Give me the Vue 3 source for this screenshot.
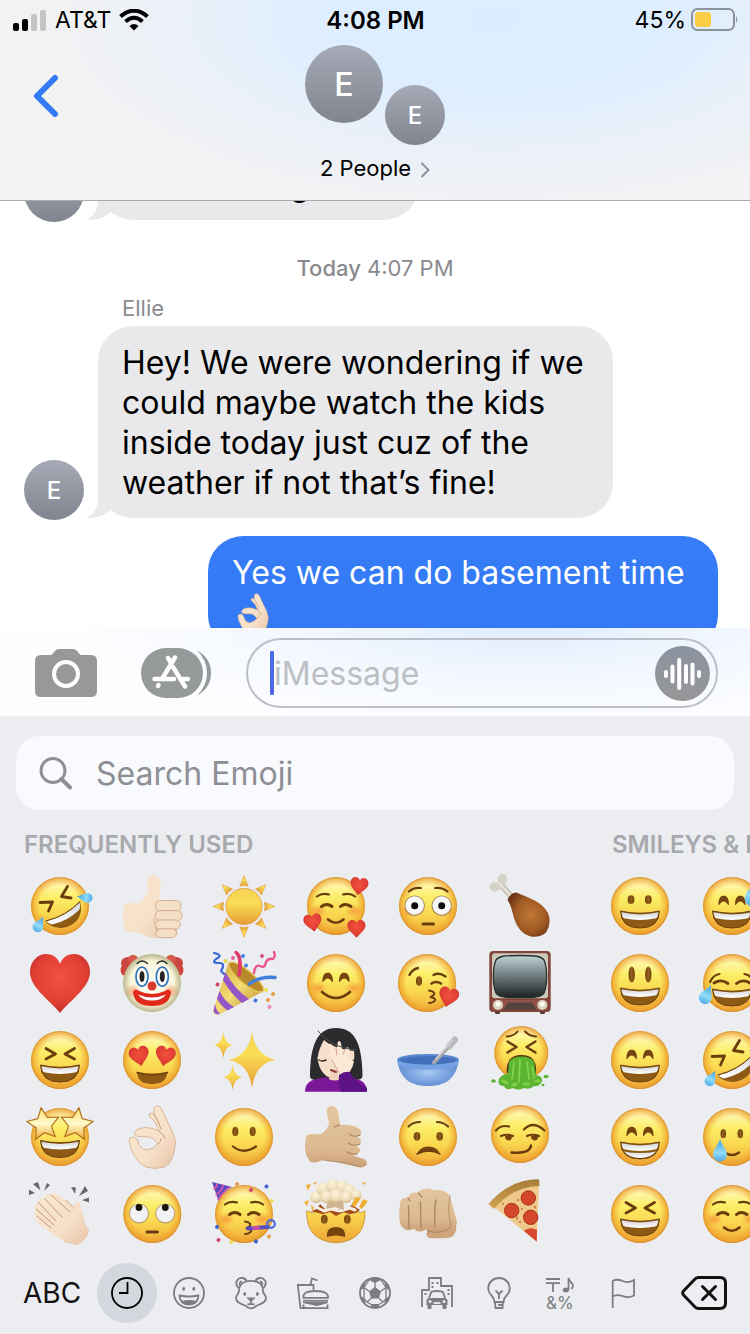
<script setup>
import { ref } from 'vue'

const draft = ref('')
const query = ref('')
const activeTab = ref('recent')

/* ---------- drawing helpers (64 x 64 canvas) ---------- */
const INK = '#6b3d0c'
const face = (x = 32, y = 32, r = 29) =>
  `<circle cx="${x}" cy="${y}" r="${r}" fill="url(#face)"/><circle cx="${x}" cy="${y}" r="${r}" fill="url(#rim)"/>`
const line = (d, w = 2.4, c = INK) =>
  `<path d="${d}" fill="none" stroke="${c}" stroke-width="${w}" stroke-linecap="round" stroke-linejoin="round"/>`
const fill = (d, c) => `<path d="${d}" fill="${c}"/>`
const oval = (x, y, rx, ry, c = 'url(#eye)') => `<ellipse cx="${x}" cy="${y}" rx="${rx}" ry="${ry}" fill="${c}"/>`
const grin = (dy = 0) =>
  `<g transform="translate(0 ${dy})"><path d="M12.500 37Q32 41.500 51.500 37Q51 54 32 54Q13 54 12.500 37Z" fill="#8d5a16" stroke="#6b3d0c" stroke-width="1"/><path d="M13.500 38.300Q32 42.500 50.500 38.300Q50 43 48 44.300Q32 47.600 16 44.300Q14 43 13.500 38.300Z" fill="url(#teeth)"/></g>`
const arches = () =>
  [23.7, 40.3].map((x) => `<path transform="translate(${x} 0)" d="M-5.300 31C-5.300 24 -3 21.800 0 21.800S5.300 24 5.300 31C4 31.600 3 27.500 0 27.500S-4 31.600 -5.300 31Z" fill="#75430f"/>`).join('')
const squint = line('M18 20.500L27.500 26L18 31', 2.8) + line('M46.500 20.500L37 26L46.500 31', 2.8)
const closed = line('M17.500 32.500Q23 28.500 28 32.500', 3) + line('M36.500 32.500Q41 28.500 47 32.500', 3)
const softBrows = line('M13 22.500Q18 18.500 25 20.500', 2.2) + line('M39 20.500Q46 18.500 51 22.500', 2.2)
const blush = oval(14, 37, 9, 7, 'url(#blush)') + oval(50, 37, 9, 7, 'url(#blush)')
const heart = (x, y, s, a = 0) =>
  `<path transform="translate(${x} ${y}) rotate(${a}) scale(${s / 60})" d="M0 29C-9 17 -30 4 -30 -12C-30 -23 -22 -30 -14 -30C-7 -30 -2 -26 0 -20C2 -26 7 -30 14 -30C22 -30 30 -23 30 -12C30 4 9 17 0 29Z" fill="url(#heart)"/>`
const drop = (x, y, s, a = 0) =>
  `<path transform="translate(${x} ${y}) rotate(${a}) scale(${s})" d="M0 -11C2 -4 7 -1 7 5A7 6.500 0 0 1 -7 5C-7 -1 -2 -4 0 -11Z" fill="url(#water)"/>`
const star = (x, y, r, a) => {
  const pts = []
  for (let i = 0; i < 10; i++) {
    const t = (i * 36 - 90 + a) * Math.PI / 180
    const q = i % 2 ? r * 0.48 : r
    pts.push(`${(x + q * Math.cos(t)).toFixed(1)},${(y + q * Math.sin(t)).toFixed(1)}`)
  }
  return `<polygon points="${pts.join(' ')}" fill="url(#star)" stroke="#b57220" stroke-width="1.200" stroke-linejoin="round"/>`
}
const spark = (x, y, w, h) =>
  fill(`M${x} ${y - h}Q${x + w * 0.14} ${y - h * 0.14} ${x + w} ${y}Q${x + w * 0.14} ${y + h * 0.14} ${x} ${y + h}Q${x - w * 0.14} ${y + h * 0.14} ${x - w} ${y}Q${x - w * 0.14} ${y - h * 0.14} ${x} ${y - h}Z`, 'url(#gold)')
const dots = (list) => list.map(([x, y, c]) => `<rect x="${x - 1.8}" y="${y - 1.8}" width="3.600" height="3.600" rx="1" transform="rotate(30 ${x} ${y})" fill="${c}"/>`).join('')
const lips = line('M33 39.500Q41 41 37 44.500L34.500 46Q41.500 47.500 38 50.500Q36 52 33 52', 2)

const rays = [0, 45, 90, 135, 180, 225, 270, 315]
  .map((a) => `<path transform="rotate(${a} 32 32.500)" d="M32 1.500L36.300 12.200Q32 10.800 27.700 12.200Z" fill="url(#gold)" stroke="#dc9a3c" stroke-width=".5"/>`)
  .join('')
const rofl =
  face() +
  line('M39.500 12.500L33.500 22.500L43 24', 2.8) + line('M12 28.500L24.500 28L20.500 37', 2.8) +
  fill('M18 47Q38 42 52 27.500Q56 42 45 50Q33 57.500 21.500 51Q18 49 18 47Z', '#8d5a16') +
  fill('M18.500 47.300Q38 42.500 51.500 28.500Q53 33 51 36Q40 47 24 50.500Q20 50 18.500 47.300Z', 'url(#teeth)') +
  line('M18 47Q38 42 52 27.500', 1) +
  drop(56.5, 23.5, 0.7, -82) + drop(11.5, 50, 0.75, 28)

const art = {
  rofl,
  thumb:
    fill('M33.500 1C39 1 41 6 40.800 13C40.500 19 38.500 23 39 27L57 27L57 60Q54 64 46 63.700L34 63.700Q28 63.500 18 58.300L8 58.300Q3 55 2.700 42Q3 31 5 29.500Q12 28.500 18 29.500Q25 24 28 17C27.500 12 26.500 8 27.300 5Q29 1 33.500 1Z', 'url(#pale)') +
    [[26.5, 10.6, 61], [36.6, 9.8, 62], [46, 9.2, 60.3], [54.8, 8.8, 56.5]].map(([y, h, r]) => `<rect x="35.500" y="${y}" width="${r - 35.5}" height="${h}" rx="4.600" fill="#f5dfc6" stroke="#d3a987" stroke-width=".9"/>`).join('') +
    line('M34 44Q35 54 38 58', 1.2, '#dcb998'),
  sun: rays + '<circle cx="32" cy="32.500" r="18" fill="url(#gold)" stroke="#dc9a3c" stroke-width=".8"/>',
  adore: face() + blush + softBrows + closed + line('M24 45.500Q32 52 39.500 45.500', 2.6) + heart(55, 12.5, 18, 8) + heart(9, 49, 18, -10) + heart(52.5, 55, 18),
  flushed:
    face() + blush + line('M13 17.500Q18 13 25 14', 2.2) + line('M39 14Q46 13 51.500 17.500', 2.2) +
    oval(18.7, 31.7, 10.2, 10.2, '#a7895f') + oval(45.7, 31.7, 10.2, 10.2, '#a7895f') +
    oval(18.7, 31.5, 9.2, 9.2, '#f8f8f8') + oval(45.7, 31.5, 9.2, 9.2, '#f8f8f8') +
    oval(18.7, 31.7, 3.5, 3.5, '#0b0b0b') + oval(45.7, 31.7, 3.5, 3.5, '#0b0b0b') + line('M27 50H37.500', 3),
  drumstick:
    line('M13 11L24 23', 6, '#c9c2b8') + oval(14.5, 5.2, 4.6, 5.4, '#d5d0c8') + oval(7, 12.8, 5.6, 4.6, '#d5d0c8') + line('M12 10L22 21', 2.5, '#e8e4de') +
    fill('M19.500 26Q22 19 28.500 18.500C40 24 54 27 60 39Q64 49 58 58.500Q52 63.500 44 62.700C35 61 29 54 26 44C24 37 23 31 19.500 26Z', 'url(#roast)'),
  heart: heart(32, 33, 60),
  clown:
    oval(8, 12, 7, 6, '#c9453b') + oval(5.500, 19, 5, 6, '#c9453b') + oval(56, 12, 7, 6, '#c9453b') + oval(58.500, 19, 5, 6, '#c9453b') + oval(13, 8, 5, 4, '#d9574a') + oval(51, 8, 5, 4, '#d9574a') +
    '<circle cx="32" cy="32" r="29" fill="url(#clown)"/>' + oval(13, 40, 8, 7, 'url(#blush)') + oval(51, 40, 8, 7, 'url(#blush)') +
    line('M17 12.500Q22 7.500 27.500 12.500', 1.3, '#222') + line('M37 12.500Q42 7.500 47 12.500', 1.3, '#222') +
    [22, 42.3].map((x) => `<ellipse cx="${x}" cy="25.700" rx="6" ry="9.600" fill="#fff" stroke="#2f74b8" stroke-width="1.700"/><ellipse cx="${x}" cy="25.500" rx="2.500" ry="5.500" fill="#222"/>`).join('') +
    oval(32, 35, 4.5, 4.5, '#d93a2c') + fill('M13 41Q15 36.500 19 40Q32 46 45 40Q49 36.500 51 41Q50 55 32 55Q14 55 13 41Z', '#e0281b') + fill('M18 43.500Q32 49.500 46 43.500Q42 49.500 32 49.500Q22 49.500 18 43.500Z', '#fff'),
  party:
    fill('M16.500 11.500L1 60Q2 65 8 63L50 41Z', 'url(#cone)') + fill('M13.500 21L11 29Q19 43 30 52L37 48Q22 38 13.500 21Z', '#9556c9') + fill('M7.500 40L5 48Q10 56 15.500 59.500L22 56Q12 50 7.500 40Z', '#9556c9') + fill('M3 53L1.500 60Q3 64 8 63Q4 59 3 53Z', '#9556c9') +
    '<ellipse cx="34" cy="26" rx="22" ry="6.500" transform="rotate(40 34 26)" fill="#b98a2a" stroke="#ecc659" stroke-width="1.400"/>' +
    line('M27 24C29 13 28 4 24 1.500', 3.4, '#e0396d') + line('M37 33Q48 25 63 26.500', 3.4, '#3f80df') + line('M2 2Q12 4 4 8Q-1 12 7 12Q14 12 9 20L12 23', 2.2, '#3a68d6') + line('M42 22Q43 13 48 15Q53 18 54 11Q56 7 61 8Q64 5 62 1', 2.4, '#e85690') +
    dots([[13.500, 10, '#ecd744'], [21, 7, '#ea5e9a'], [31, 5, '#4a86e8'], [34, 14.500, '#4a86e8'], [50, 5, '#dd5682'], [5.500, 33.500, '#cf4560'], [54, 39, '#f0dc55'], [61, 43, '#e0a04a'], [56, 49, '#e89a4a'], [43.500, 49.500, '#4a76d8'], [57.500, 56, '#ee86b8']]),
  blushing: face() + blush + arches() + line('M18 41Q32 53 46 41', 2.6),
  kiss:
    face(31, 32) + line('M13.500 24Q16 18.500 22 17', 2.4) + line('M37.500 24Q43 21 49.500 25.500', 2.4) + oval(23, 30, 3.1, 4.8) + line('M35.500 32.500Q40 29.500 45 32.500', 2.6) + lips + heart(52.3, 46.5, 20, 14),
  tv:
    '<rect x="7" y="58" width="5" height="5" rx="1.500" fill="#54302a"/><rect x="52" y="58" width="5" height="5" rx="1.500" fill="#54302a"/><rect x="1.300" y="0" width="61.400" height="61" rx="4" fill="#80463b"/><rect x="4" y="2.300" width="56" height="45" rx="3" fill="#cfc9bb"/><path d="M32 4.500C48 4.500 53 5 56 9C59.500 17 59.500 34 56 42C53 46 48 46.700 32 46.700S11 46 8 42C4.500 34 4.500 17 8 9C11 5 16 4.500 32 4.500Z" fill="url(#screen)" stroke="#2a2f30" stroke-width="1.300"/><rect x="4" y="49" width="56" height="10" rx="2" fill="#925448"/><path d="M20 51.500H44L49 59H15Z" fill="#55443e"/>' +
    oval(10, 54, 5, 5, '#ddd5c4') + oval(54.3, 54, 5, 5, '#ddd5c4') + oval(10, 53, 2.5, 2.5, '#fffbee') + oval(54.3, 53, 2.5, 2.5, '#fffbee'),
  laugh: face() + squint + grin(),
  love: face() + heart(19.5, 28.5, 20, -12) + heart(45, 28.5, 20, 12) + fill('M17 44.500Q32 48.500 47.500 44.500Q46 56 32 56Q18 56 17 44.500Z', '#8d5a16') + line('M17 44.500Q32 48.500 47.500 44.500', 1.4),
  sparkles: spark(40, 31.7, 23.5, 28) + spark(11.3, 17, 9, 13) + spark(20.7, 49.3, 9, 12.5),
  facepalm:
    fill('M32 0C50 0 58 14 58.500 48Q58 52 52 52H12Q6 52 6 48C6 18 13 0 32 0Z', '#2b2b2d') + fill('M13.500 30Q15 20 20 12Q28 20 50 23Q53 46 32 51Q16 50 13.500 30Z', '#f7dfcb') + fill('M27 42H39V54H24Z', '#efd0b8') +
    fill('M1 63.700Q1 53 13 51L22 49Q30 56 41 49L52 51Q63 53 63 63.700Z', '#7d179a') + line('M15 32Q18 34 22 32', 1.4, '#3a2a22') + line('M44 32Q47 34 50 32', 1.4, '#3a2a22') + line('M27 42L32 44', 2, '#8b3f2d') +
    fill('M24.500 18Q25 14 28 17L33 26L33.500 15Q35 11 37 15L38.500 25L42 20Q45 18 45.500 22L45 30Q50 31 49 36L46 43L45 49H34L34 40Q26 31 26 25Z', '#fbe8d6') + line('M28 32L35 45M33 27L32 20M39 26L41 22', 0.9, '#cf9f82') +
    fill('M35 47Q40 43 46 44Q50 53 63 60V63.700H37Q34 56 35 47Z', '#5c1283') + line('M14 3Q27 20 52 22', 1, '#4f5053'),
  bowl:
    fill('M1.300 31C3 50 14 58 32 58S61 50 62.700 31Z', 'url(#bowl)') + oval(32, 31.5, 30.7, 5.6, '#5b8ad2') + oval(32, 32.3, 28.5, 4, '#4370b9') + line('M38 34.500L56 15', 4, '#a9a7ae') + line('M53 18.500L59 11.500', 6, '#b9b6bc') + line('M40 31L57 12', 1.2, '#d8d6db') + fill('M1.500 33Q32 41 62.500 33Q62 36 61.500 38Q32 45 2.500 38Z', '#75a2e4'),
  sick:
    face(33.3, 25, 27) + line('M19 8.500Q26 8 29.500 3.500', 2) + line('M37 3.500Q41 8 48 8.500', 2) + line('M19.500 13.500L28.500 19L19.500 24.500', 2.4) + line('M47.500 13.500L38.500 19L47.500 24.500', 2.4) +
    fill('M18.700 45C18 33 23 27 33.500 27S49 33 48 45Z', '#54340e') + fill('M21 34Q24 28.500 33.500 28.500T46 34L48 47Q55 48 54 53Q52 59 46 58Q42 62 36 60Q30 63 25 60Q18 63 16 58Q9 58 11 51Q14 46 20 46Z', '#5cb531') +
    line('M26 34L24 51M32 32L31 54M39 34L41 51M44 39L46 50', 1.6, '#86d64d') + line('M15 53L19 55M25 57L28 56M36 56L40 56M48 53L51 53', 3, '#7fd149') + oval(5.5, 53, 2.3, 1.8, '#5cb531') + oval(58, 48.500, 2.5, 1.8, '#5cb531') + oval(55, 57, 1.5, 1.2, '#5cb531'),
  starstruck: face() + grin(-1.5) + star(15.5, 19.5, 17, -8) + star(48.5, 19.5, 17, 8),
  ok:
    '<path fill-rule="evenodd" d="M36.700 1Q41 1 42.500 6L48 18Q53.500 27 55.500 37Q55 45 53 50Q51 59 44 62Q35 65 26 62Q18 58 14 50Q10 43 9 36Q9 32 13 32Q17 32.500 18 36Q19 42 23 44Q28 46 33 43L38 39Q35 34 30 32L19 31.500Q14 31 14.500 28Q16 23 26 22.500Q33 23 39 26L35 17Q29 12 29 9Q30 7 34 9Q33 1 36.700 1Z" fill="url(#pale)" stroke="#d3a987" stroke-width=".8"/>' +
    line('M34 9Q38 15 41 24M39 26Q44 30 45 33M38 39Q41 37 41 34', 1, '#c79672'),
  smile: face() + oval(23.3, 26.5, 3, 4.8) + oval(40.7, 26.5, 3, 4.8) + line('M21 41.500Q32 50 44 41.500', 2.2),
  callme:
    fill('M27.500 1Q33 1 34.500 9L36 20Q47 19 54 23Q58 25 57 29Q55 32 52 32Q58 33 57 37Q56 41 51 41Q57 43 56 46Q54 50 48 50L60 54Q64 56 62.500 60Q60 63 54 62L32 57L19 55Q11 59 6 56.500Q1 50 1 42Q1 31 4 29.500Q10 28.500 16 29.500Q24 25 25 18L22.500 6Q23 1 27.500 1Z', 'url(#tan)') +
    line('M45 29Q51 33 56 30M44 38Q50 42 56 39M43 47Q48 50 53 49M36 20L30 22', 1.1, '#a8835e') + line('M19 55L42 58L57 62', 0.8, '#a8835e'),
  worried: face() + line('M12.500 21.500Q17 17 24 17', 2.2) + line('M41 17Q47 17 52 21.500', 2.2) + oval(21, 31.3, 3.3, 4.4) + oval(43.7, 31.3, 3.3, 4.4) + fill('M20.500 49.500Q24 41.500 32.500 41.500T44.500 49.500Q33 43.500 20.500 49.500Z', '#75430f') + line('M21 49Q33 43 44 49', 1.4),
  smirk:
    face(32, 29) + line('M8 25.500Q13 19.500 21 21.500', 2.2) + line('M36 24.500Q45 15 56.500 25.500', 2.2) + line('M13 31Q19 28.500 25 31', 2.2) + line('M39 31Q45 28.500 51 31', 2.2) + fill('M17 31H24Q24 35.500 20.500 35.500Q17 35 17 31Z', '#75430f') + fill('M43 31H50.500Q50 35.500 46.500 35.500Q43 35 43 31Z', '#75430f') + line('M23.500 47.500Q42 49 43 40.500', 2.4),
  clap:
    fill('M5 2L10 0L12.500 8.500ZM1 7.500L7 11L1 13ZM19 1L22 3L16 9ZM43 5L48 5.500L47 12ZM57 4L60 9L51 14ZM54 18L61 15.500V20.500Z', '#67686a') +
    fill('M34 20Q38 15 42 21L53 31Q56 42 61 48Q60 57 49 63L36 60Z', '#e9c9ac') +
    fill('M10 20Q11 14 17 17Q17 10 23 13Q26 9 31 13L47 28Q46 22 48 20Q52 19 53 25Q57 38 57 44L61 49Q58 59 48 63Q38 60 34 58Q23 52 8 39Q5 36 9 34Q3 28 8 27Q5 22 10 20Z', 'url(#pale)') + line('M17 17L34 35M23 13L42 30M10 20L28 39M8 27L26 43M9 34L23 46', 1, '#c79672'),
  eyeroll:
    face(32.3, 32) + [19, 45.3].map((x) => oval(x, 31.5, 10, 10, '#b59a72') + oval(x, 31.3, 9, 9, '#f2f2f4') + oval(x, 25.5, 3.4, 3.4, '#1a1208')).join('') + line('M27 50H37.500', 3),
  birthday:
    face() + blush + fill('M0 0L20 5Q11 9 6.500 19Z', '#5a49bd') + line('M5 2Q5 5 2 7M11 3Q11 8 4 13M17 5Q13 9 6 17', 1.6, '#dd58ac') + softBrows + closed + lips +
    line('M36 46.500L56 45', 4, '#5a4cc6') + line('M42 46L46 46', 4, '#c651a4') + '<circle cx="59" cy="42" r="3.800" fill="none" stroke="#4f66d3" stroke-width="2.200"/>' +
    dots([[25, 2, '#e5a04e'], [39, 8, '#d34868'], [54.500, 4.500, '#3f65cf'], [59.500, 19, '#f1dc52'], [5, 45, '#3f65cf'], [6.500, 58, '#d34868'], [19.500, 60, '#eed94f'], [44, 59.500, '#3f65cf'], [57, 54.500, '#e5a04e']]),
  mindblown:
    '<path d="M2.700 29L9 31L13 28L19 32L26 29L32 33L38 29L45 32L52 28L56 31L61 29Q62 59 32 60.800Q2 59 2.700 29Z" fill="url(#faceLow)" stroke="#c88625" stroke-width=".8"/>' +
    fill('M7 29L13 27L16 22L21 27L42 27L48 23L56 28L52 31L46 32L40 30L32 34L26 30L18 32Z', '#a54b1f') + line('M14 26L20 29L27 27L36 29L46 26L51 28', 3, '#f5efe2') + fill('M24 18L22 27L31 25L40 28L39 18Z', '#cdb48f') +
    [[12, 15, 6], [19, 7, 6.5], [29, 4, 6.500], [38, 5, 6], [45, 9, 6.500], [52, 13, 5.500], [22, 15, 6], [32, 14, 7], [42, 15, 6]].map(([x, y, r]) => `<circle cx="${x}" cy="${y}" r="${r}" fill="url(#cloud)"/>`).join('') +
    fill('M2 3L7 2L4 9ZM9 1L13 0L11 3ZM58 1L62 0L61 3ZM52 15L57 16L51 25L47 23ZM59 17L64 19L58 27L55 25ZM0 20L5 18L3 24ZM7 22L10 26L8 29Z', '#efae36') + oval(20.3, 37.3, 3.3, 4.5) + oval(43.3, 37.3, 3.3, 4.5) + fill('M23 55Q22 45 32 45T41 55Q32 52 23 55Z', '#75430f'),
  fist:
    fill('M30 46L59 40Q63 48 56 55Q50 57 33 56Q29 53 31 50Z', '#cda47c') +
    fill('M4 21Q5 15 12 16Q14 9 22 11Q25 6 33 6.500Q38 9 41 8Q50 8 54 14Q57 25 61 40Q61 45 56 46Q50 50 44 47Q36 51 31 47Q23 52 18 47Q10 50 6 45Q3 42 3.300 31Z', 'url(#tan)') + line('M12.500 24L13 46M24.500 20L25 46M40 18Q38 27 39 45M12 16L14 19M22 11L26 15', 1.3, '#a8835e') + line('M54 14Q51 30 55 44', 1, '#b58e66') + line('M32 49Q45 53 55 45', 1, '#a8835e'),
  pizza:
    fill('M4 23Q23 2 51 3L48.700 60Z', '#efc98c') + fill('M0.500 22Q22 -3 51 -2.700L51.500 4Q24 5 6 27Z', 'url(#crust)') + oval(30, 18, 1.5, 1, '#d1803d') + oval(32, 40, 1.5, 1, '#d1803d') + oval(29, 36, 1, 1.5, '#c96c33') + oval(47, 25, 1.2, 1.6, '#d1803d') + oval(15, 22, 1.2, 1, '#d1803d') + oval(34, 27, 1, 1, '#c96c33') +
    [[40.3, 16, 7.2], [23.7, 28.5, 7.2], [42.7, 35.3, 7.2]].map(([x, y, r]) => `<circle cx="${x}" cy="${y}" r="${r}" fill="#d5472c" stroke="#a9301c" stroke-width="1"/>`).join('') + fill('M36 49Q41 44 49 48L48.700 59.500Z', '#d5472c'),
  grinning: face() + oval(23, 25.7, 3.4, 4.4) + oval(40.3, 25.7, 3.4, 4.4) + grin(),
  open: face() + oval(23.7, 23.5, 3.2, 8) + oval(40.3, 23.5, 3.2, 8) + grin(),
  happy: face() + arches() + grin(),
  beaming: face() + arches() + grin() + fill('M16 46.500Q32 49.500 48 46.500Q43 53 32 53T16 46.500Z', 'url(#teeth)'),
  sweat: face() + arches() + grin() + drop(54, 19, 1.2, 8),
  joy: face() + line('M10 31Q13 24 19.500 23', 2.2) + line('M44.500 23Q51 24 54 31', 2.2) + line('M14 32Q21 27.500 28 32.500', 2.8) + line('M36.500 32.500Q43 27.500 50 32', 2.8) + grin(1) + drop(7, 43, 0.9, 25) + drop(57, 43, 0.9, -25),
  tear: face() + oval(23.3, 28.7, 2.8, 4.6) + oval(40.3, 28.7, 2.8, 4.6) + line('M25 47.500Q32 52.500 39 47.500', 2.4) + drop(20, 45, 1, 0),
  relaxed: face() + blush + softBrows + closed + line('M24 45.500Q32 52 39.500 45.500', 2.6),
}

const groups = [
  {
    id: 'recent',
    title: 'Frequently used',
    rows: [
      ['rofl', 'thumb', 'sun', 'adore', 'flushed', 'drumstick'],
      ['heart', 'clown', 'party', 'blushing', 'kiss', 'tv'],
      ['laugh', 'love', 'sparkles', 'facepalm', 'bowl', 'sick'],
      ['starstruck', 'ok', 'smile', 'callme', 'worried', 'smirk'],
      ['clap', 'eyeroll', 'birthday', 'mindblown', 'fist', 'pizza'],
    ],
  },
  {
    id: 'smileys',
    title: 'Smileys & People',
    rows: [['grinning', 'sweat'], ['open', 'joy'], ['happy', 'rofl'], ['beaming', 'tear'], ['laugh', 'relaxed']],
  },
]

const tabs = [
  { id: 'recent', svg: '<circle cx="16" cy="16" r="15"/><path d="M16.500 5V16H8"/>' },
  { id: 'smileys', svg: '<circle cx="16" cy="16" r="15"/><ellipse cx="10.700" cy="11.800" rx="1" ry="1.600" fill="currentColor" stroke-width="1"/><ellipse cx="20.800" cy="11.800" rx="1" ry="1.600" fill="currentColor" stroke-width="1"/><path d="M6.500 18.500Q16 20.500 25.500 18.500Q25 27.500 16 27.500T6.500 18.500Z"/><path d="M8.500 24Q16 22 23.500 24Q21 27.500 16 27.500T8.500 24Z" fill="currentColor" stroke="none"/>' },
  { id: 'animals', svg: '<path d="M3.500 11Q0 7 2 3.500Q4 .5 7.500 1Q11 1.500 11.500 4.500M28.500 11Q32 7 30 3.500Q28 .5 24.500 1Q21 1.500 20.500 4.500M5 8Q4 5 7 4.500M27 8Q28 5 25 4.500"/><path d="M16 3.800C24 3.800 28 8 28 14C28 17 31 18 31 21C31 26 25 27 21 29Q19 31.300 16 31.300T11 29C7 27 1 26 1 21C1 18 4 17 4 14C4 8 8 3.800 16 3.800Z"/><ellipse cx="9.700" cy="17" rx="1" ry="1.500" fill="currentColor" stroke-width="1"/><ellipse cx="22.300" cy="17" rx="1" ry="1.500" fill="currentColor" stroke-width="1"/><path d="M13.500 21.500H18.500L16 24Z" fill="currentColor"/><path d="M16 24V27M12.500 27.500Q16 26.500 19.500 27.500"/>' },
  { id: 'food', svg: '<path d="M13.500 7.500L15 1.500L20.500 3.500M16.500 13V8H.8L3.500 31.200H10"/><path d="M6.500 20.800Q5 14 18.500 14T31 20.800Z"/><path d="M6 23.800H31" /><path d="M6 25.500H31L20 28.500Z" fill="currentColor" stroke-width="1"/><path d="M6.500 27.500V31.200H30.500V27.500"/>' },
  { id: 'sports', svg: '<circle cx="16" cy="16" r="15"/><path d="M16 10.500L21.500 14.500L19.500 21H12.500L10.500 14.500ZM10 2.500L16 5.500L22 2.500L16 1ZM1.500 13L5.500 10L6 4.500L3 8ZM30.500 13L26.500 10L26 4.500L29 8ZM6 26.500L5.500 22L1.500 19.500L3 24ZM26 26.500L26.500 22L30.500 19.500L29 24ZM12 30.500L13 27.500H19L20 30.500Z" fill="currentColor" stroke-width="1"/><path d="M16 5V11M10.500 14.500L5 10.500M21.500 14.500L27 10.500M12.500 21L8 25M19.500 21L24 25M8 25L13 28M24 25L19 28M5 10.500V22L8 25M27 10.500V22L24 25M5 10.500Q8 6 10 3M27 10.500Q24 6 22 3" stroke-width="1.300"/>' },
  { id: 'travel', svg: '<path d="M1 30V13H8V1H20V9H31V30"/><path d="M11.500 5V7M16.500 5V7M11.500 9V11M4.500 16V18M27.500 12V14M27.500 16V18" stroke-width="2"/><path d="M8 21L10 15.500Q11 14 16 14T22 15.500L24 21"/><path d="M5.500 23Q6 21 9 21H23Q26 21 26.500 23V28H5.500Z" fill="currentColor" stroke="none"/><path d="M7 28V31.500H10V28M22 28V31.500H25V28" fill="currentColor" stroke-width="1"/><circle cx="9" cy="24.500" r="1.500" fill="#ecedf1" stroke="none"/><circle cx="23" cy="24.500" r="1.500" fill="#ecedf1" stroke="none"/><path d="M12.500 26H19.500" stroke="#ecedf1"/>' },
  { id: 'objects', svg: '<path d="M11.500 25Q11.500 21.500 8.500 18.500Q5.200 15 5.200 11.500C5.200 5.500 10 1 16 1S26.800 5.500 26.800 11.500Q26.800 15 23.500 18.500Q20.500 21.500 20.500 25Z"/><path d="M12.500 13.500L16 17L19.500 13.500M16 17V22M12 25L12.500 31H19.500L20 25M15 28H19"/>' },
  { id: 'symbols', svg: '<path d="M1 2H15M1 6.200H15M8 6.200V15"/><path d="M23.500 13V1Q24 4 27 6.500Q29 9 26.500 12"/><ellipse cx="20.800" cy="13" rx="2.800" ry="2" fill="currentColor" stroke-width="1"/>', text: '&%' },
  { id: 'flags', svg: '<path d="M5.700 31V4Q10 1.500 15.500 4Q21 6.500 27 3V18.500Q21 21.500 15.500 19Q10 17 5.700 19.500"/>' },
]
</script>

<template>
  <main class="phone">
    <svg class="defs" aria-hidden="true">
      <defs>
        <linearGradient id="face" x1="0" y1="0" x2="0" y2="1"><stop offset="0" stop-color="#fffbd2" /><stop offset=".35" stop-color="#fcee68" /><stop offset=".65" stop-color="#f9d64e" /><stop offset="1" stop-color="#f0ac3c" /></linearGradient>
        <linearGradient id="faceLow" x1="0" y1="0" x2="0" y2="1"><stop offset="0" stop-color="#fade54" /><stop offset="1" stop-color="#eea534" /></linearGradient>
        <radialGradient id="rim"><stop offset=".7" stop-color="#f0a028" stop-opacity="0" /><stop offset=".93" stop-color="#ee9f2c" stop-opacity=".7" /><stop offset="1" stop-color="#cf8128" stop-opacity=".9" /></radialGradient>
        <radialGradient id="blush"><stop offset="0" stop-color="#f4642a" stop-opacity=".5" /><stop offset="1" stop-color="#f4642a" stop-opacity="0" /></radialGradient>
        <linearGradient id="eye" x1="0" y1="0" x2="1" y2="0"><stop offset="0" stop-color="#6b3d0c" /><stop offset=".5" stop-color="#94601c" /><stop offset="1" stop-color="#6b3d0c" /></linearGradient>
        <linearGradient id="teeth" x1="0" y1="0" x2="0" y2="1"><stop offset="0" stop-color="#d5d6da" /><stop offset="1" stop-color="#ffffff" /></linearGradient>
        <radialGradient id="heart" cx=".5" cy=".4" r=".62"><stop offset="0" stop-color="#f25040" /><stop offset=".7" stop-color="#e03f33" /><stop offset="1" stop-color="#b92a28" /></radialGradient>
        <linearGradient id="water" x1="0" y1="0" x2="0" y2="1"><stop offset="0" stop-color="#3f9be0" /><stop offset=".6" stop-color="#93dcfa" /><stop offset="1" stop-color="#4fa9e6" /></linearGradient>
        <linearGradient id="pale" x1="0" y1="0" x2="1" y2="1"><stop offset="0" stop-color="#f9e7d0" /><stop offset=".6" stop-color="#f6e0c9" /><stop offset="1" stop-color="#e8c4a6" /></linearGradient>
        <linearGradient id="tan" x1="0" y1="0" x2="0" y2="1"><stop offset="0" stop-color="#e3c6a0" /><stop offset=".7" stop-color="#dcb990" /><stop offset="1" stop-color="#cb9f77" /></linearGradient>
        <linearGradient id="gold" x1="0" y1="0" x2="0" y2="1"><stop offset="0" stop-color="#f7cf55" /><stop offset=".4" stop-color="#fade55" /><stop offset="1" stop-color="#e69c37" /></linearGradient>
        <linearGradient id="star" x1="0" y1="0" x2="0" y2="1"><stop offset="0" stop-color="#f9df6c" /><stop offset=".5" stop-color="#fffbd0" /><stop offset="1" stop-color="#eaa92c" /></linearGradient>
        <radialGradient id="roast" cx=".55" cy=".5" r=".6"><stop offset="0" stop-color="#c07834" /><stop offset=".6" stop-color="#a15a25" /><stop offset="1" stop-color="#6d3413" /></radialGradient>
        <radialGradient id="clown"><stop offset="0" stop-color="#fffff8" /><stop offset=".75" stop-color="#f8f6dc" /><stop offset="1" stop-color="#bdb68c" /></radialGradient>
        <linearGradient id="cone" x1="0" y1="0" x2="1" y2="1"><stop offset="0" stop-color="#caa233" /><stop offset=".5" stop-color="#f5dc76" /><stop offset="1" stop-color="#b18424" /></linearGradient>
        <linearGradient id="screen" x1="0" y1="0" x2="0" y2="1"><stop offset="0" stop-color="#bfd3d5" /><stop offset=".5" stop-color="#6b797c" /><stop offset="1" stop-color="#1b2022" /></linearGradient>
        <radialGradient id="bowl" cx=".5" cy=".5" r=".6"><stop offset="0" stop-color="#a9c9f4" /><stop offset="1" stop-color="#5683cc" /></radialGradient>
        <radialGradient id="cloud" cx=".45" cy=".3" r=".8"><stop offset="0" stop-color="#fdf5de" /><stop offset=".6" stop-color="#ecdcb6" /><stop offset="1" stop-color="#c2a470" /></radialGradient>
        <linearGradient id="crust" x1="0" y1="0" x2="0" y2="1"><stop offset="0" stop-color="#a77c38" /><stop offset="1" stop-color="#d2a354" /></linearGradient>
      </defs>
    </svg>

    <header class="header">
      <div class="status">
        <div class="carrier">
          <svg width="34" height="21" viewBox="0 0 34 21"><rect y="13" width="6" height="8" rx="2" /><rect x="9" y="9" width="6" height="12" rx="2" /><rect x="18" y="4" width="6" height="17" rx="2" fill="#c3c4c6" /><rect x="27" width="6" height="21" rx="2" fill="#c3c4c6" /></svg>
          <span>AT&amp;T</span>
          <svg width="30" height="22" viewBox="0 0 30 22" fill="none" stroke="#000" stroke-width="4"><path d="M1.500 7.500Q15 -4 28.500 7.500" /><path d="M6.500 12.500Q15 5 23.500 12.500" /><path d="M15 21.500L10.500 17Q15 13 19.500 17Z" fill="#000" stroke="none" /></svg>
        </div>
        <time class="clock">4:08 PM</time>
        <div class="power">
          <span>45%</span>
          <svg width="48" height="24" viewBox="0 0 48 24"><rect x="2" y="1" width="42" height="21" rx="5.500" fill="none" stroke="#8b939c" stroke-width="2" /><rect x="5" y="4" width="16" height="15" rx="3" fill="#f9cd45" /><path d="M46 8Q48.500 11.500 46 15Z" fill="#8b939c" /></svg>
        </div>
      </div>
      <div class="title">
        <button class="back" aria-label="Back">
          <svg width="26" height="44" viewBox="0 0 26 44"><path d="M22 4L4 22L22 40" /></svg>
        </button>
        <button class="group">
          <span class="faces"><span class="avatar large">E</span><span class="avatar">E</span></span>
          <span class="people">2 People <svg width="10" height="16" viewBox="0 0 10 16"><path d="M1.500 1L8.500 8L1.500 15" /></svg></span>
        </button>
      </div>
    </header>

    <section class="thread" aria-label="Messages">
      <div class="incoming earlier">
        <span class="avatar">E</span>
        <p class="bubble">
          Sounds so good it
          <svg class="tail" width="34" height="40" viewBox="0 0 34 40"><path d="M11 5V20C11 29 8 35 0 39.500C9 40.500 17 38 24 32L30 24L20 0Z" /></svg>
        </p>
      </div>
      <p class="stamp"><b>Today</b> 4:07 PM</p>
      <p class="sender">Ellie</p>
      <div class="incoming">
        <span class="avatar">E</span>
        <p class="bubble">
          Hey! We were wondering if we could maybe watch the kids inside today just cuz of the weather if not that’s fine!
          <svg class="tail" width="34" height="40" viewBox="0 0 34 40"><path d="M11 5V20C11 29 8 35 0 39.500C9 40.500 17 38 24 32L30 24L20 0Z" /></svg>
        </p>
      </div>
      <p class="bubble outgoing">Yes we can do basement time <svg class="inline-emoji" viewBox="0 0 64 64" role="img" aria-label="ok" v-html="art.ok"></svg></p>
    </section>

    <form class="composer" @submit.prevent>
      <button type="button" class="plain" aria-label="Camera">
        <svg width="62" height="48" viewBox="0 0 62 48"><path d="M6 6H16Q18 5 20 2Q21.500 0 24 0H38Q40.500 0 42 2Q44 5 46 6H56Q62 6 62 12V42Q62 48 56 48H6Q0 48 0 42V12Q0 6 6 6Z" fill="#989898" /><circle cx="31" cy="25" r="12" fill="none" stroke="#fff" stroke-width="4" /></svg>
      </button>
      <button type="button" class="plain apps" aria-label="Apps">
        <svg width="70" height="50" viewBox="0 0 70 50"><path d="M56 2.500Q70 10 70 25T56 47.500Q66 38 66 25T56 2.500Z" fill="#979a9b" /><rect width="62" height="50" rx="25" fill="#969999" /><g stroke="#fff" stroke-width="4.500" stroke-linecap="round" fill="none"><path d="M27 10L30 15M34 9.500L21 31M13.500 31H33M42 31H47M32 19L44 38.500M17.500 37L17 38" /></g></svg>
      </button>
      <div class="field">
        <i class="caret"></i>
        <input v-model="draft" type="text" aria-label="iMessage" placeholder="iMessage" />
        <button type="button" class="plain voice" aria-label="Record audio">
          <svg width="55" height="55" viewBox="0 0 55 55"><circle cx="27.500" cy="27.500" r="27.500" fill="url(#voice)" /><defs><linearGradient id="voice" x1="0" y1="0" x2="0" y2="1"><stop stop-color="#8b93a1" /><stop offset="1" stop-color="#969696" /></linearGradient></defs><path d="M11 26V30M17.500 20.500V35.500M24.200 14V42M31 20V36M37.500 18.500V37.500M44 26V30" stroke="#fff" stroke-width="4" stroke-linecap="round" /></svg>
        </button>
      </div>
    </form>

    <section class="keyboard" aria-label="Emoji keyboard">
      <label class="search">
        <svg width="34" height="34" viewBox="0 0 34 34"><circle cx="14" cy="14.500" r="12" /><path d="M22.500 23L31 31.500" stroke-width="4" /></svg>
        <input v-model="query" type="text" aria-label="Search Emoji" placeholder="Search Emoji" />
      </label>

      <div class="groups">
        <div v-for="g in groups" :key="g.id" class="emoji-group" :class="g.id">
          <h2>{{ g.title }}</h2>
          <div v-for="(row, i) in g.rows" :key="i" class="row">
            <button v-for="name in row" :key="name" class="emoji" :aria-label="name">
              <svg width="64" height="64" viewBox="0 0 64 64" v-html="art[name]"></svg>
            </button>
          </div>
        </div>
      </div>

      <nav class="tabs">
        <button class="abc">ABC</button>
        <div class="tab-list">
          <button v-for="t in tabs" :key="t.id" class="tab" :class="{ active: t.id === activeTab }" :aria-label="t.id" @click="activeTab = t.id">
            <svg width="32" height="32" viewBox="0 0 32 32"><g v-html="t.svg"></g><text v-if="t.text" x="1" y="32">{{ t.text }}</text></svg>
          </button>
        </div>
        <button class="delete" aria-label="Delete">
          <svg width="46" height="34" viewBox="0 0 46 34"><path d="M17.500 1.500H39Q44.500 1.500 44.500 7V27Q44.500 32.500 39 32.500H17.500Q15.500 32.500 14 31L2.500 19Q.8 17 2.500 15L14 3Q15.500 1.500 17.500 1.500Z" /><path d="M21.500 10.500L34.500 23.500M34.500 10.500L21.500 23.500" /></svg>
        </button>
      </nav>
    </section>
  </main>
</template>

<style>
body {
  margin: 0;
  background: #fff;
}
</style>

<style scoped>
.phone {
  display: flex;
  flex-direction: column;
  height: 100vh;
  overflow: hidden;
  background: #fff;
  color: #000;
  font-family: Inter, "Liberation Sans", sans-serif;
}
.defs {
  position: absolute;
  width: 0;
  height: 0;
}
button {
  padding: 0;
  border: 0;
  background: none;
  color: inherit;
  font: inherit;
}
p,
h2 {
  margin: 0;
}
svg {
  display: block;
  flex: none;
}

/* header */
.header {
  flex: none;
  border-bottom: 1px solid #a9abae;
  background:
    radial-gradient(ellipse 60% 95% at 66% 10%, #dbedff 0%, #deeeff 42%, rgba(229, 239, 252, 0.6) 68%, rgba(243, 243, 244, 0) 100%),
    #f2f2f3;
}
.status {
  display: grid;
  grid-template-columns: 1fr auto 1fr;
  align-items: center;
  height: 40px;
  padding: 0 12px 0 13px;
  font-size: 23px;
}
.carrier,
.power {
  display: flex;
  align-items: center;
  gap: 8px;
}
.power {
  justify-content: flex-end;
  gap: 4px;
}
.clock {
  font-size: 24px;
  font-weight: 600;
}
.title {
  display: grid;
  grid-template-columns: 1fr auto 1fr;
  height: 160px;
}
.back {
  justify-self: start;
  align-self: start;
  margin: 34px 0 0 33px;
}
.back path {
  fill: none;
  stroke: #337af5;
  stroke-width: 6;
  stroke-linecap: round;
  stroke-linejoin: round;
}
.group {
  display: flex;
  flex-direction: column;
  align-items: center;
  padding-top: 5px;
}
.faces {
  display: flex;
  gap: 2px;
  height: 100px;
}
.faces .avatar {
  align-self: flex-end;
}
.faces .large {
  align-self: flex-start;
}
.avatar {
  flex: none;
  display: grid;
  place-items: center;
  width: 60px;
  height: 60px;
  border-radius: 50%;
  background: linear-gradient(#a6aab6, #81858f);
  color: #fff;
  font-size: 24px;
  font-weight: 500;
}
.large {
  width: 78px;
  height: 78px;
  font-size: 32px;
}
.people {
  display: flex;
  align-items: center;
  gap: 9px;
  margin-top: 9px;
  font-size: 22px;
  line-height: 28px;
}
.people svg {
  margin-top: 3px;
  fill: none;
  stroke: #8a8f99;
  stroke-width: 2;
}

/* thread */
.thread {
  flex: 1;
  min-height: 0;
  overflow: hidden;
}
.incoming {
  display: flex;
  align-items: flex-end;
  gap: 14px;
  padding-left: 24px;
}
.earlier {
  margin-top: -53px;
}
.bubble {
  position: relative;
  box-sizing: border-box;
  width: fit-content;
  max-width: 515px;
  margin-bottom: 2px;
  padding: 17px 24px 15px;
  border-radius: 35px;
  background: #e9e9eb;
  font-size: 32px;
  line-height: 40px;
}
.tail {
  position: absolute;
  left: -11px;
  bottom: 0;
  fill: #e9e9eb;
}
.stamp {
  margin-top: 32px;
  color: #8a8a8e;
  font-size: 22px;
  line-height: 28px;
  text-align: center;
}
.stamp b {
  font-weight: 500;
}
.sender {
  margin: 12px 0 4px 122px;
  color: #8a8a8e;
  font-size: 22px;
  line-height: 28px;
}
.outgoing {
  max-width: 510px;
  margin: 16px 32px 0 auto;
  background: linear-gradient(#367df7, #3377f5);
  color: #fff;
}
.inline-emoji {
  display: inline-block;
  width: 42px;
  height: 42px;
  vertical-align: top;
}

/* composer */
.composer {
  flex: none;
  display: flex;
  align-items: center;
  padding: 10px 32px 8px 35px;
  background: radial-gradient(ellipse 62% 120% at 70% 0%, #e0edfd 0%, #f2f7ff 45%, rgba(255, 255, 255, 0) 100%), #fefeff;
}
.apps {
  margin: 0 35px 0 44px;
}
.field {
  flex: 1;
  min-width: 0;
  box-sizing: border-box;
  display: flex;
  align-items: center;
  height: 70px;
  padding: 0 6px 0 22px;
  border: 2px solid #bcbfc5;
  border-radius: 35px;
}
.caret {
  flex: none;
  width: 4px;
  height: 44px;
  border-radius: 1px;
  background: #4b6ae8;
}
input {
  flex: 1;
  min-width: 0;
  padding: 0;
  border: 0;
  outline: 0;
  background: none;
  color: #000;
  font: inherit;
  font-size: 32px;
}
.field input::placeholder {
  color: #bdbfc4;
  opacity: 1;
}

/* keyboard */
.keyboard {
  flex: none;
  padding-top: 20px;
  background: #ecedf1;
}
.search {
  display: flex;
  align-items: center;
  gap: 23px;
  height: 74px;
  margin: 0 16px;
  padding: 0 23px;
  border-radius: 24px;
  background: #f9fafe;
}
.search svg {
  fill: none;
  stroke: #8e9095;
  stroke-width: 3;
  stroke-linecap: round;
}
.search input::placeholder {
  color: #8e8f94;
  opacity: 1;
}
.groups {
  display: flex;
  gap: 28px;
  overflow: hidden;
  padding-left: 14px;
}
.emoji-group {
  flex: none;
}
.smileys {
  width: 184px;
}
h2 {
  margin: 21px 0 8px 10px;
  color: #a8a9ad;
  font-size: 24px;
  font-weight: 600;
  line-height: 28px;
  text-transform: uppercase;
  white-space: nowrap;
}
.smileys h2 {
  margin-left: 18px;
}
.row {
  display: flex;
}
.emoji {
  display: grid;
  place-items: center;
  width: 92px;
  height: 77px;
}
.emoji svg {
  overflow: visible;
}
.tabs {
  display: flex;
  align-items: center;
  height: 82px;
  padding: 0 23px;
}
.abc {
  width: 57px;
  font-size: 28px;
  color: #111;
}
.tab-list {
  display: flex;
  gap: 2px;
  margin-left: 17px;
}
.tab {
  display: grid;
  place-items: center;
  width: 60px;
  height: 60px;
  border-radius: 50%;
  color: #7b7d80;
}
.tab svg {
  overflow: visible;
  fill: none;
  stroke: currentColor;
  stroke-width: 1.8;
}
.tab text {
  fill: currentColor;
  stroke: none;
  font-size: 17px;
}
.tab.active {
  background: #d5d7df;
  color: #000;
}
.delete {
  margin-left: auto;
}
.delete svg {
  fill: none;
  stroke: #111;
  stroke-width: 3;
  stroke-linecap: round;
  stroke-linejoin: round;
}
</style>
